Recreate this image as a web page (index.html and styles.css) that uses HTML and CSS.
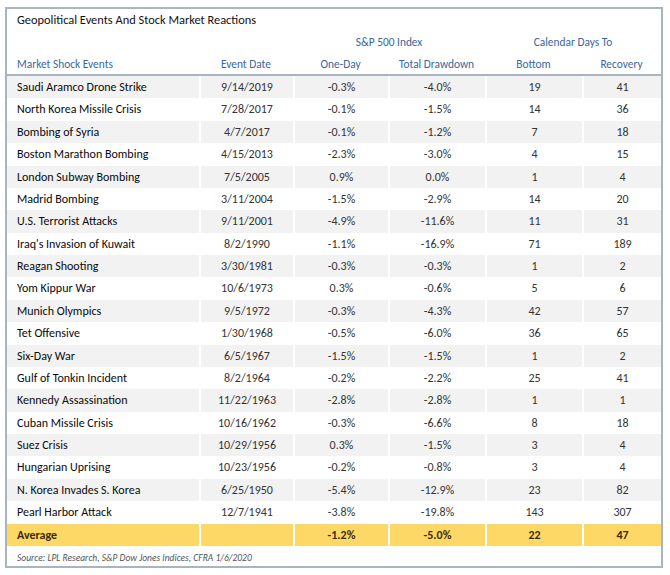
FILE: index.html
```html
<!DOCTYPE html>
<html>
<head>
<meta charset="utf-8">
<link rel="stylesheet" href="styles.css">
</head>
<body>
<div class="frame">
  <div class="title">Geopolitical Events And Stock Market Reactions</div>
  <div class="head">
    <div class="grp grp-sp">S&amp;P 500 Index</div>
    <div class="grp grp-cal">Calendar Days To</div>
    <div class="sub first">Market Shock Events</div>
    <div class="sub">Event Date</div>
    <div class="sub">One-Day</div>
    <div class="sub">Total Drawdown</div>
    <div class="sub">Bottom</div>
    <div class="sub">Recovery</div>
  </div>
  <div class="rows">
    <div class="row"><div class="c name">Saudi Aramco Drone Strike</div><div class="c">9/14/2019</div><div class="c">-0.3%</div><div class="c">-4.0%</div><div class="c">19</div><div class="c">41</div></div>
    <div class="row"><div class="c name">North Korea Missile Crisis</div><div class="c">7/28/2017</div><div class="c">-0.1%</div><div class="c">-1.5%</div><div class="c">14</div><div class="c">36</div></div>
    <div class="row"><div class="c name">Bombing of Syria</div><div class="c">4/7/2017</div><div class="c">-0.1%</div><div class="c">-1.2%</div><div class="c">7</div><div class="c">18</div></div>
    <div class="row"><div class="c name">Boston Marathon Bombing</div><div class="c">4/15/2013</div><div class="c">-2.3%</div><div class="c">-3.0%</div><div class="c">4</div><div class="c">15</div></div>
    <div class="row"><div class="c name">London Subway Bombing</div><div class="c">7/5/2005</div><div class="c">0.9%</div><div class="c">0.0%</div><div class="c">1</div><div class="c">4</div></div>
    <div class="row"><div class="c name">Madrid Bombing</div><div class="c">3/11/2004</div><div class="c">-1.5%</div><div class="c">-2.9%</div><div class="c">14</div><div class="c">20</div></div>
    <div class="row"><div class="c name">U.S. Terrorist Attacks</div><div class="c">9/11/2001</div><div class="c">-4.9%</div><div class="c">-11.6%</div><div class="c">11</div><div class="c">31</div></div>
    <div class="row"><div class="c name">Iraq's Invasion of Kuwait</div><div class="c">8/2/1990</div><div class="c">-1.1%</div><div class="c">-16.9%</div><div class="c">71</div><div class="c">189</div></div>
    <div class="row"><div class="c name">Reagan Shooting</div><div class="c">3/30/1981</div><div class="c">-0.3%</div><div class="c">-0.3%</div><div class="c">1</div><div class="c">2</div></div>
    <div class="row"><div class="c name">Yom Kippur War</div><div class="c">10/6/1973</div><div class="c">0.3%</div><div class="c">-0.6%</div><div class="c">5</div><div class="c">6</div></div>
    <div class="row"><div class="c name">Munich Olympics</div><div class="c">9/5/1972</div><div class="c">-0.3%</div><div class="c">-4.3%</div><div class="c">42</div><div class="c">57</div></div>
    <div class="row"><div class="c name">Tet Offensive</div><div class="c">1/30/1968</div><div class="c">-0.5%</div><div class="c">-6.0%</div><div class="c">36</div><div class="c">65</div></div>
    <div class="row"><div class="c name">Six-Day War</div><div class="c">6/5/1967</div><div class="c">-1.5%</div><div class="c">-1.5%</div><div class="c">1</div><div class="c">2</div></div>
    <div class="row"><div class="c name">Gulf of Tonkin Incident</div><div class="c">8/2/1964</div><div class="c">-0.2%</div><div class="c">-2.2%</div><div class="c">25</div><div class="c">41</div></div>
    <div class="row"><div class="c name">Kennedy Assassination</div><div class="c">11/22/1963</div><div class="c">-2.8%</div><div class="c">-2.8%</div><div class="c">1</div><div class="c">1</div></div>
    <div class="row"><div class="c name">Cuban Missile Crisis</div><div class="c">10/16/1962</div><div class="c">-0.3%</div><div class="c">-6.6%</div><div class="c">8</div><div class="c">18</div></div>
    <div class="row"><div class="c name">Suez Crisis</div><div class="c">10/29/1956</div><div class="c">0.3%</div><div class="c">-1.5%</div><div class="c">3</div><div class="c">4</div></div>
    <div class="row"><div class="c name">Hungarian Uprising</div><div class="c">10/23/1956</div><div class="c">-0.2%</div><div class="c">-0.8%</div><div class="c">3</div><div class="c">4</div></div>
    <div class="row"><div class="c name">N. Korea Invades S. Korea</div><div class="c">6/25/1950</div><div class="c">-5.4%</div><div class="c">-12.9%</div><div class="c">23</div><div class="c">82</div></div>
    <div class="row"><div class="c name">Pearl Harbor Attack</div><div class="c">12/7/1941</div><div class="c">-3.8%</div><div class="c">-19.8%</div><div class="c">143</div><div class="c">307</div></div>
    <div class="row avg"><div class="c name">Average</div><div class="c"></div><div class="c">-1.2%</div><div class="c">-5.0%</div><div class="c">22</div><div class="c">47</div></div>
  </div>
  <div class="source">Source: LPL Research, S&amp;P Dow Jones Indices, CFRA 1/6/2020</div>
</div>
</body>
</html>
```
FILE: styles.css
```css
html, body {
  margin: 0;
  padding: 0;
  background: #ffffff;
}
body {
  font-family: Carlito, Calibri, Lato, "Open Sans", sans-serif;
  font-size: 12px;
  color: #222;
}
.frame {
  box-sizing: border-box;
  margin: 7px 0 0 5px;
  width: 658px;
  height: 561px;
  border: 2px solid #a7b4c1;
  display: flex;
  flex-direction: column;
}
.title {
  height: 21px;
  line-height: 21px;
  padding-left: 10px;
  font-size: 12.4px;
  color: #111;
}
.head {
  display: grid;
  grid-template-columns: 192px 94px 95px 97px 97px 1fr;
  grid-template-rows: 24px 20px;
  border-bottom: 2px solid #a7b4c1;
  color: #3a689a;
  font-size: 11.4px;
}
.grp {
  grid-row: 1;
  text-align: center;
  line-height: 25px;
}
.grp-sp { grid-column: 3 / span 2; }
.grp-cal { grid-column: 5 / span 2; }
.sub {
  grid-row: 2;
  text-align: center;
  line-height: 20px;
}
.sub.first {
  grid-column: 1;
  text-align: left;
  padding-left: 10px;
}
.rows {
  display: flex;
  flex-direction: column;
}
.row {
  display: grid;
  grid-template-columns: 192px 94px 95px 97px 97px 1fr;
  height: 22.38px;
  line-height: 22.38px;
  color: #333;
}
.row:nth-child(odd) {
  background: #f2f2f2;
}
.c {
  text-align: center;
  border-left: 2px solid #ffffff;
  white-space: nowrap;
}
.c.name {
  border-left: none;
  text-align: left;
  padding-left: 10px;
  color: #0a0a0a;
}
.row.avg {
  background: #fdd867;
  font-weight: bold;
  color: #3b2a08;
}
.row.avg .c.name {
  color: #3b2a08;
}
.source {
  padding: 6px 0 0 10px;
  font-size: 9.5px;
  font-style: italic;
  color: #555;
}
```
